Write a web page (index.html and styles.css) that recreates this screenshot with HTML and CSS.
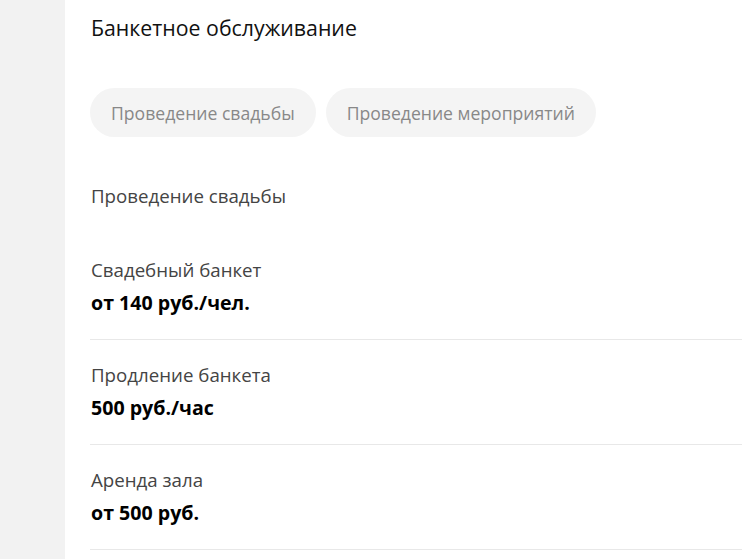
FILE: index.html
```html
<!DOCTYPE html>
<html lang="ru">
<head>
<meta charset="utf-8">
<link rel="stylesheet" href="styles.css">
</head>
<body>
<div class="page">
  <aside class="side"></aside>
  <main class="content">
    <h1 class="title">Банкетное обслуживание</h1>
    <div class="chips">
      <button class="chip">Проведение свадьбы</button>
      <button class="chip">Проведение мероприятий</button>
    </div>
    <h2 class="section">Проведение свадьбы</h2>
    <ul class="list">
      <li class="item">
        <div class="name">Свадебный банкет</div>
        <div class="price">от 140 руб./чел.</div>
      </li>
      <li class="item">
        <div class="name">Продление банкета</div>
        <div class="price">500 руб./час</div>
      </li>
      <li class="item">
        <div class="name">Аренда зала</div>
        <div class="price">от 500 руб.</div>
      </li>
    </ul>
  </main>
</div>
</body>
</html>
```

FILE: styles.css
```css
* { box-sizing: border-box; }
html, body { margin: 0; padding: 0; background: #fff; }
body {
  font-family: "Open Sans", "Noto Sans", sans-serif;
  color: #444;
  overflow: hidden;
  height: 559px;
}
.page {
  display: flex;
  min-height: 559px;
}
.side {
  width: 65px;
  flex: none;
  background: #f2f2f2;
}
.content {
  flex: 1;
  padding: 14px 0 0 25px;
}
.title {
  margin: 0 0 0 1px;
  font-size: 21.3px;
  font-weight: 400;
  color: #111;
  line-height: 28px;
}
.chips {
  display: flex;
  gap: 10px;
  margin-top: 46px;
}
.chip {
  font: inherit;
  font-size: 17.6px;
  color: #888;
  background: #f4f4f4;
  border: none;
  border-radius: 25px;
  height: 49px;
  padding: 0 21px;
}
.section {
  margin: 46px 0 0 1px;
  font-size: 18.7px;
  font-weight: 400;
  color: #444;
  line-height: 26px;
}
.list {
  list-style: none;
  margin: 48px 0 0;
  padding: 0;
}
.item {
  border-bottom: 1px solid #e8e8e8;
  padding: 0 0 23px 1px;
  margin-bottom: 22px;
}
.name {
  font-size: 18.7px;
  line-height: 26px;
  color: #444;
}
.price {
  margin-top: 7px;
  font-size: 19.6px;
  line-height: 26px;
  font-weight: 700;
  color: #000;
}
```
